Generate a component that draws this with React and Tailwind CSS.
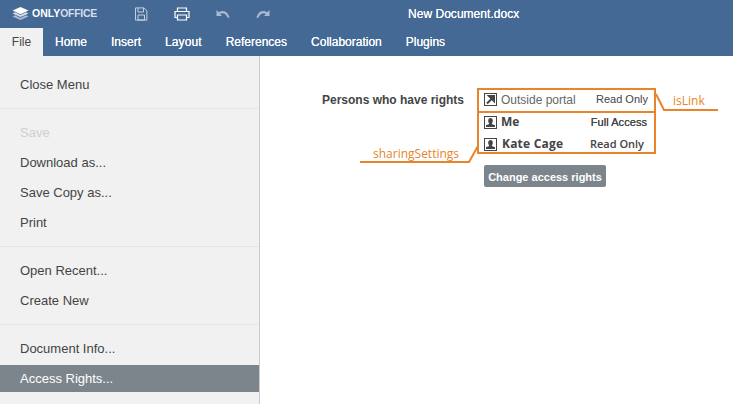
import React from "react";

const sans = "font-['Liberation_Sans',Arial,sans-serif]";

function LinkIcon() {
  return (
    <svg width="13" height="13" viewBox="0 0 13 13" className="shrink-0">
      <rect x="0.5" y="0.5" width="12" height="12" fill="#fff" stroke="#444" />
      <path d="M3 10.5 L8 5.5 M5 3 H10 V8 Z" stroke="#444" strokeWidth="2" fill="#444" />
    </svg>
  );
}

function UserIcon() {
  return (
    <svg width="13" height="13" viewBox="0 0 13 13" className="shrink-0">
      <rect x="0.5" y="0.5" width="12" height="12" fill="#fff" stroke="#444" />
      <path d="M4.2 4.7 C4.2 3 5.1 2 6.5 2 C7.9 2 8.8 3 8.8 4.7 C8.8 6 8.3 6.8 7.9 7.3 V8 L11 9.2 V11 H2 V9.2 L5.1 8 V7.3 C4.7 6.8 4.2 6 4.2 4.7 Z" fill="#444" />
    </svg>
  );
}

function UndoIcon({ flip }) {
  return (
    <svg width="14" height="10" viewBox="0 0 14 10" className={flip ? "-scale-x-100" : ""}>
      <path d="M0.5 1 L0.5 7 L6 7 L4 5 C6.5 3.5 9.5 4 11.5 8.5 L13.5 9 C12.5 3 7.5 0 2.8 3.3 Z" fill="#a9bbd0" />
    </svg>
  );
}

const Item = ({ children, muted, active }) => (
  <div
    className={`h-[27px] mt-[3px] pl-5 flex items-center text-[13px] ${
      active ? "bg-[#7d858c] text-white" : muted ? "text-[#cfcfcf]" : "text-[#444]"
    }`}
  >
    {children}
  </div>
);

const Divider = () => <div className="h-px bg-[#e4e4e4] mt-[10px] mb-[10px]" />;

export default function App() {
  return (
    <div className={`w-[733px] h-[404px] overflow-hidden bg-white flex flex-col ${sans}`}>
      <header className="h-14 shrink-0 bg-[#446995] text-white">
        <div className="h-7 relative flex items-center">
          <div className="w-[124px] pl-3 flex items-center gap-[3px]">
            <svg width="17" height="14" viewBox="0 0 17 14" className="shrink-0">
              <path d="M8.5 0 L16.5 3.6 L8.5 7.2 L0.5 3.6 Z" fill="#fff" />
              <path d="M0.5 6.4 L3 5.3 L8.5 7.9 L14 5.3 L16.5 6.4 L8.5 10.1 Z" fill="#d5dde7" />
              <path d="M0.5 9.4 L3 8.3 L8.5 10.9 L14 8.3 L16.5 9.4 L8.5 13.1 Z" fill="#a9bbd0" />
            </svg>
            <span className="text-[10.5px] font-bold text-white whitespace-nowrap">
              ONLY<span className="text-[#d5dde7] font-bold tracking-[-0.3px]">OFFICE</span>
            </span>
          </div>
          <div className="flex items-center">
            <svg width="14" height="14" viewBox="0 0 14 14" className="ml-[10px]">
              <path d="M1.5 0.9 H10 L12.9 3.8 V13.1 H1.5 Z M4 1 V5 H9.5 V1 M4 8 H10.5 V13 H4 Z" fill="none" stroke="#c4d0de" strokeWidth="1" />
            </svg>
            <svg width="16" height="14" viewBox="0 0 16 14" className="ml-[26px]">
              <path d="M3.5 4.5 V1 H12.5 V4.5 M3.5 10.5 H1 V4.5 H15 V10.5 H12.5 M3.5 8 H12.5 V13 H3.5 Z" fill="none" stroke="#fff" strokeWidth="1.2" />
            </svg>
            <span className="ml-[26px] flex"><UndoIcon /></span>
            <span className="ml-[26px] flex"><UndoIcon flip /></span>
          </div>
          <div className="absolute left-[408px] top-0 h-7 flex items-center text-[12px] tracking-[0.03px] [text-shadow:0_0_0.4px_#fff] whitespace-nowrap">
            New Document.docx
          </div>
        </div>
        <nav className="h-7 flex text-[12px] [text-shadow:0_0_0.4px_#fff]">
          <div className="w-[43px] bg-[#f1f1f1] text-[#444] flex items-center justify-center">File</div>
          <div className="ml-3 flex items-center">Home</div>
          <div className="ml-6 flex items-center">Insert</div>
          <div className="ml-6 flex items-center tracking-[0.1px]">Layout</div>
          <div className="ml-6 flex items-center">References</div>
          <div className="ml-6 flex items-center">Collaboration</div>
          <div className="ml-6 flex items-center">Plugins</div>
        </nav>
      </header>

      <div className="flex-1 min-h-0 flex">
        <aside className="w-[260px] shrink-0 bg-[#f1f1f1] border-r border-[#cbcbcb] pt-3 overflow-hidden">
          <Item>Close Menu</Item>
          <Divider />
          <Item muted>Save</Item>
          <Item>Download as...</Item>
          <Item>Save Copy as...</Item>
          <Item>Print</Item>
          <Divider />
          <Item>Open Recent...</Item>
          <Item>Create New</Item>
          <Divider />
          <Item>Document Info...</Item>
          <Item active>Access Rights...</Item>
          <Item muted>Version History...</Item>
        </aside>

        <main className="flex-1 relative pt-[32px]">
          <div className="flex">
            <div className="w-[224px] pl-[62px] pt-[3px] text-[12px] font-bold text-[#444] whitespace-nowrap h-[23px]">
              Persons who have rights
            </div>
            <div className="w-[171px]">
              <div className="h-[23px] flex items-center justify-between pr-[7px] text-[12px] text-[#666]">
                <span className="flex items-center gap-[4px]"><LinkIcon /><span>Outside portal</span></span>
                <span className="text-[11px] text-[#444]">Read Only</span>
              </div>
              <div className="h-[22px] flex items-center justify-between pr-[8px] text-[12px] text-[#444]">
                <span className="flex items-center gap-[4px]"><UserIcon /><span className="font-['Open_Sans',sans-serif] font-bold">Me</span></span>
                <span className="text-[11px] tracking-[0.05px] [text-shadow:0_0_0.3px_#444]">Full Access</span>
              </div>
              <div className="h-[22px] flex items-center justify-between pr-[11px] text-[12px] text-[#444]">
                <span className="flex items-center gap-[5px]"><UserIcon /><span className="font-['Open_Sans',sans-serif] font-bold tracking-[0.2px]">Kate Cage</span></span>
                <span className="text-[11px] font-['Open_Sans',sans-serif] font-semibold">Read Only</span>
              </div>
              <button className="mt-[10px] pt-[2px] h-[22px] w-[122px] rounded-[2px] bg-[#7d858c] text-white text-[11px] font-bold flex items-center justify-center whitespace-nowrap">
                Change access rights
              </button>
            </div>
          </div>

          {/* annotation overlay */}
          <div className="absolute left-[217px] top-[32px] w-[179px] h-[66px] border-2 border-[#e8842a] pointer-events-none">
            <div className="absolute left-0 right-0 top-[21px] h-[2px] bg-[#e8842a]" />
          </div>
          <svg className="absolute left-[90px] top-[30px] pointer-events-none" width="380" height="90" viewBox="0 0 380 90" fill="none">
            <path d="M306 8 L314 24 H368" stroke="#e8842a" strokeWidth="2" />
            <path d="M128 60 L119 76 H10" stroke="#e8842a" strokeWidth="2" />
          </svg>
          <div className="absolute left-[413px] top-[36px] text-[12px] text-[#e8842a] font-['Open_Sans',sans-serif]">isLink</div>
          <div className="absolute left-[113px] top-[89px] text-[12px] text-[#e8842a] font-['Open_Sans',sans-serif]">sharingSettings</div>
        </main>
      </div>
    </div>
  );
}
